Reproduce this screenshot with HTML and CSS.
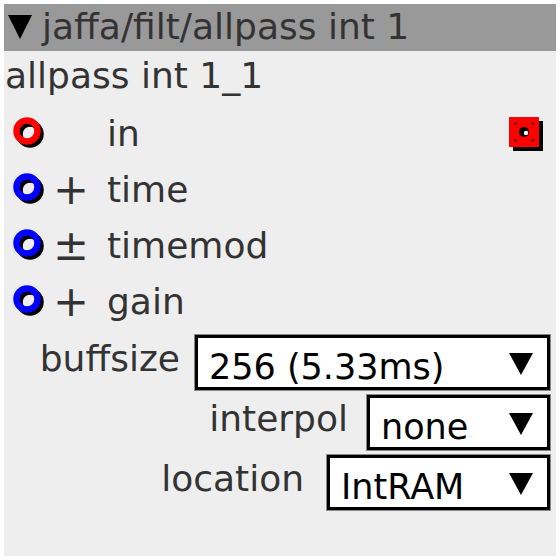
FILE: index.html
```html
<!DOCTYPE html>
<html>
<head>
    <meta charset="utf-8">
    <title>allpass int 1</title>
    <link rel="stylesheet" href="styles.css">
</head>
<body>
<div class="node">
    <div class="node-head">
        <span class="caret"></span>
        <span class="node-path">jaffa/filt/allpass int 1</span>
    </div>
    <div class="node-name">allpass int 1_1</div>

    <div class="port-row">
        <svg class="port" width="32" height="32" viewBox="0 0 32 32">
            <circle cx="17" cy="17" r="10.5" fill="none" stroke="#000" stroke-width="6.5"/>
            <circle cx="14" cy="14" r="10.5" fill="none" stroke="#f00" stroke-width="6.5"/>
        </svg>
        <span class="sign"></span>
        <span class="port-label">in</span>
        <svg class="out-port" width="36" height="36" viewBox="0 0 36 36">
            <rect x="4" y="4" width="30" height="30" fill="#000"/>
            <rect x="0" y="0" width="30" height="30" fill="#f00"/>
            <path d="M6 8V6h2M22 6h2v2M24 22v2h-2M8 24H6v-2" fill="none" stroke="#000" stroke-width="1"/>
            <circle cx="15" cy="15" r="5" fill="#000"/>
            <circle cx="17" cy="16" r="2.2" fill="#fff"/>
        </svg>
    </div>
    <div class="port-row">
        <svg class="port" width="32" height="32" viewBox="0 0 32 32">
            <circle cx="17" cy="17" r="10.5" fill="none" stroke="#000" stroke-width="6.5"/>
            <circle cx="14" cy="14" r="10.5" fill="none" stroke="#00f" stroke-width="6.5"/>
        </svg>
        <span class="sign">+</span>
        <span class="port-label">time</span>
    </div>
    <div class="port-row">
        <svg class="port" width="32" height="32" viewBox="0 0 32 32">
            <circle cx="17" cy="17" r="10.5" fill="none" stroke="#000" stroke-width="6.5"/>
            <circle cx="14" cy="14" r="10.5" fill="none" stroke="#00f" stroke-width="6.5"/>
        </svg>
        <span class="sign">±</span>
        <span class="port-label">timemod</span>
    </div>
    <div class="port-row">
        <svg class="port" width="32" height="32" viewBox="0 0 32 32">
            <circle cx="17" cy="17" r="10.5" fill="none" stroke="#000" stroke-width="6.5"/>
            <circle cx="14" cy="14" r="10.5" fill="none" stroke="#00f" stroke-width="6.5"/>
        </svg>
        <span class="sign">+</span>
        <span class="port-label">gain</span>
    </div>

    <div class="params">
        <div class="param-row param-buff">
            <span class="param-label">buffsize</span>
            <div class="select">
                <span class="select-value">256 (5.33ms)</span>
                <span class="select-arrow"></span>
            </div>
        </div>
        <div class="param-row param-interp">
            <span class="param-label">interpol</span>
            <div class="select">
                <span class="select-value">none</span>
                <span class="select-arrow"></span>
            </div>
        </div>
        <div class="param-row param-loc">
            <span class="param-label">location</span>
            <div class="select">
                <span class="select-value">IntRAM</span>
                <span class="select-arrow"></span>
            </div>
        </div>
    </div>
</div>
</body>
</html>
```

FILE: styles.css
```css
body {
    margin: 4px;
    background: #fff;
    font-family: "DejaVu Sans", sans-serif;
    font-size: 36px;
    color: #333;
}

.node {
    width: 552px;
    height: 552px;
    background-color: #eee;
    overflow: hidden;
}

.node-head {
    height: 47px;
    box-sizing: border-box;
    padding: 2px 0 0 4px;
    background-color: #999;
    display: flex;
    align-items: flex-start;
    line-height: 41px;
}

.caret {
    width: 0;
    height: 0;
    margin-top: 9px;
    margin-right: 10px;
    border-left: 12px solid transparent;
    border-right: 12px solid transparent;
    border-top: 24px solid #000;
}

.node-name {
    height: 54px;
    box-sizing: border-box;
    padding: 4px 0 0 1px;
    line-height: 41px;
}

.port-row {
    height: 56px;
    display: flex;
    align-items: center;
    line-height: 41px;
}

.port {
    margin-left: 9px;
}

.sign {
    width: 54px;
    margin-left: 8px;
    font-size: 43px;
    line-height: 41px;
}

.out-port {
    margin-left: auto;
    margin-right: 11px;
    margin-top: 4px;
}

.params {
    margin-top: 6px;
}

.param-row {
    display: flex;
    justify-content: flex-end;
    align-items: flex-start;
    margin-right: 6px;
    margin-bottom: 5px;
}

.param-label {
    margin-top: 3px;
    line-height: 41px;
}

.select {
    height: 55px;
    box-sizing: border-box;
    border: 3px solid #000;
    outline: 1px solid #888;
    background-color: #fff;
    color: #000;
    font-size: 35px;
    display: flex;
    align-items: flex-start;
    padding: 9px 14px 0 11px;
    overflow: hidden;
}

.select-value {
    line-height: 41px;
    white-space: nowrap;
}

.select-arrow {
    width: 0;
    height: 0;
    margin-left: auto;
    margin-top: 6px;
    border-left: 12px solid transparent;
    border-right: 12px solid transparent;
    border-top: 22px solid #000;
}

.param-buff .param-label {
    margin-right: 15px;
}

.param-buff .select {
    width: 355px;
}

.param-interp .param-label {
    margin-right: 19px;
}

.param-interp .select {
    width: 183px;
}

.param-loc .param-label {
    margin-right: 23px;
}

.param-loc .select {
    width: 223px;
}
```
